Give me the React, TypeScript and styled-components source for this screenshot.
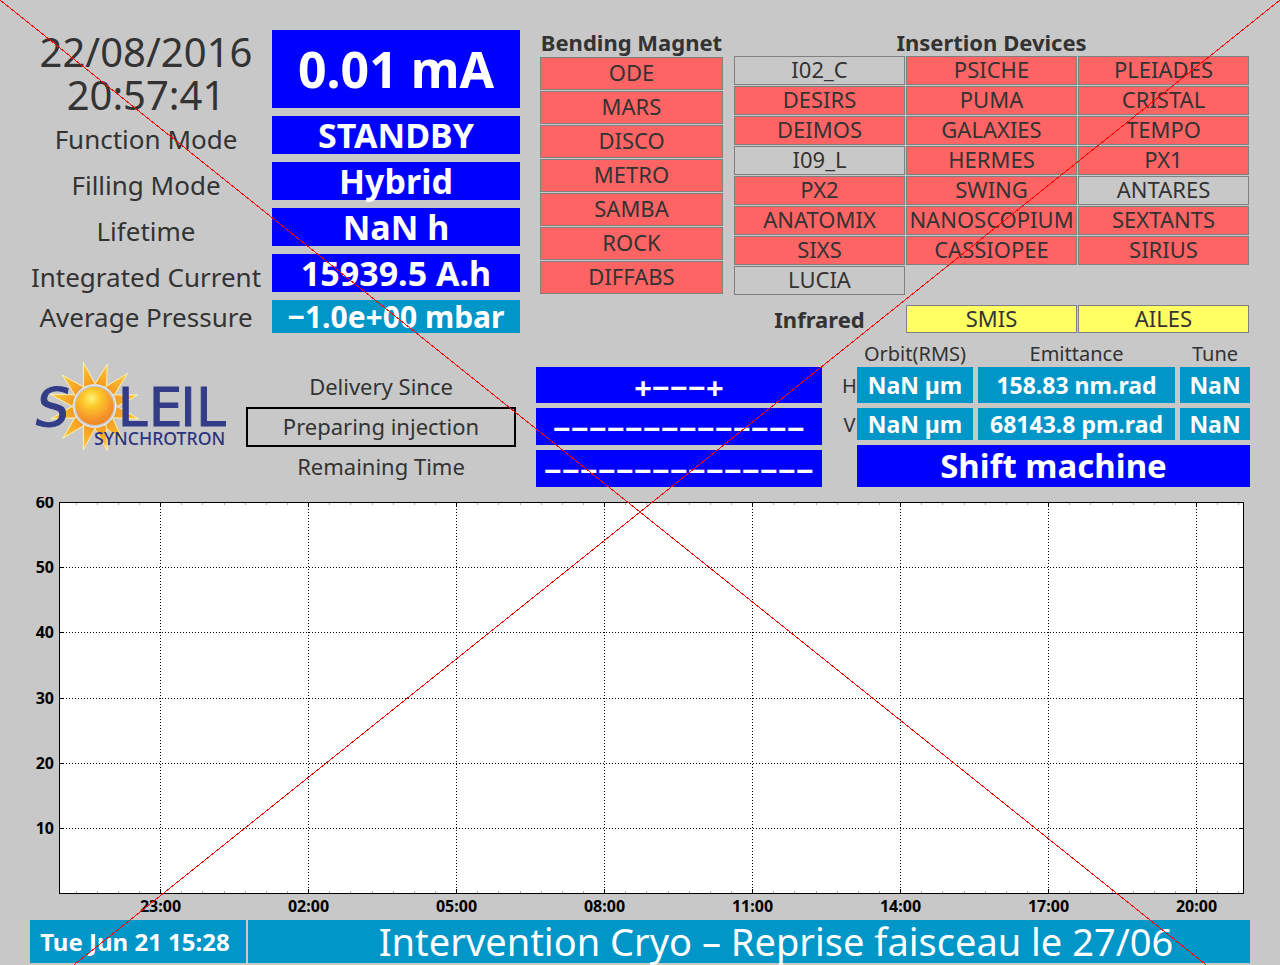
import React from "react";
import styled, { createGlobalStyle } from "styled-components";

const color = {
  page: "#c8c8c8",
  text: "#333333",
  blue: "#0000ff",
  cyan: "#0096c8",
  closed: "#ff6464",
  open: "#ffff64",
  line: "#808080",
};

const GlobalStyle = createGlobalStyle`
  *, *::before, *::after { box-sizing: border-box; }
  body {
    margin: 0;
    background: ${color.page};
    color: ${color.text};
    font-family: "Noto Sans", "Open Sans", sans-serif;
  }
`;

const Page = styled.main`
  position: relative;
  overflow: hidden;
  padding: 30px 30px 2px;
`;

const TopSection = styled.section`
  display: grid;
  grid-template-columns: 499fr 183fr 515fr;
  column-gap: 11px;
  padding-right: 1px;
`;

/* Machine status */

const Status = styled.dl`
  display: grid;
  grid-template-columns: 232fr 248fr;
  grid-template-rows: 78px repeat(4, 38px) 33px;
  gap: 8px 10px;
  margin: 0 9px 0 0;
`;

const Clock = styled.dt`
  font-size: 40px;
  line-height: 43px;
  text-align: center;
`;

const StatusLabel = styled.dt<{ $lowered?: boolean }>`
  display: flex;
  align-items: center;
  justify-content: center;
  padding-top: ${(p) => (p.$lowered ? 8 : 0)}px;
  font-size: 26px;
  line-height: 30px;
  white-space: nowrap;
`;

const Value = styled.dd<{ $size: number; $tone?: "blue" | "cyan" }>`
  display: flex;
  align-items: center;
  justify-content: center;
  margin: 0;
  background: ${(p) => color[p.$tone ?? "blue"]};
  color: #fff;
  font-size: ${(p) => p.$size}px;
  font-weight: 700;
  line-height: 1;
  white-space: nowrap;
`;

/* Beamlines */

const Heading = styled.h2<{ $gap: number }>`
  margin: 0 0 ${(p) => p.$gap}px;
  font-size: 22px;
  font-weight: 700;
  line-height: 24px;
  text-align: center;
  white-space: nowrap;
`;

const BeamlineGrid = styled.ul<{ $columns: number; $row: number }>`
  display: grid;
  grid-template-columns: repeat(${(p) => p.$columns}, 1fr);
  grid-auto-rows: ${(p) => p.$row}px;
  gap: 1px;
  margin: 0;
  padding: 0;
  list-style: none;
`;

const Beamline = styled.li<{ $state: "closed" | "open" | "off" }>`
  display: flex;
  align-items: center;
  justify-content: center;
  padding-bottom: 3px;
  border: 1px solid ${color.line};
  background: ${(p) => (p.$state === "off" ? "transparent" : color[p.$state])};
  font-size: 22px;
  line-height: 22px;
  white-space: nowrap;
`;

const InfraredRow = styled.div`
  display: grid;
  grid-template-columns: 171fr 343fr;
  column-gap: 1px;
  align-items: center;
  margin-top: 10px;
`;

/* Delivery, beam parameters */

const MiddleSection = styled.section`
  display: grid;
  grid-template-columns: 216fr 270fr 326fr 408fr;
  margin-top: 12px;
`;

const Logo = styled.svg`
  display: block;
  width: 100%;
  max-width: 216px;
  margin-top: 15px;
`;

const DeliveryLabels = styled.div`
  display: grid;
  grid-template-rows: repeat(3, 40px);
  padding-top: 22px;
`;

const DeliveryLabel = styled.div<{ $framed?: boolean }>`
  display: flex;
  align-items: center;
  justify-content: center;
  padding-bottom: 2px;
  border: 2px solid ${(p) => (p.$framed ? "#000" : "transparent")};
  font-size: 22px;
  line-height: 24px;
  white-space: nowrap;
`;

const DeliveryValues = styled.div`
  display: grid;
  grid-template-rows: 36px 37px 37px;
  row-gap: 5px;
  margin: 0 20px;
  padding-top: 22px;
`;

const DeliveryValue = styled.div`
  display: flex;
  align-items: center;
  justify-content: center;
  padding-top: 4px;
  background: ${color.blue};
  color: #fff;
  font-size: 31px;
  font-weight: 700;
  line-height: 1;
  white-space: nowrap;
`;

const Parameters = styled.div``;

const ParameterTable = styled.table`
  display: grid;
  grid-template-columns: 10px 116fr 197fr 70fr;
  grid-template-rows: 17px 36px 32px;
  gap: 5px;

  thead, tbody, tr { display: contents; }
`;

const ColumnHead = styled.th`
  padding: 0;
  font-size: 20px;
  font-weight: 400;
  line-height: 17px;
  white-space: nowrap;
`;

const RowHead = styled.th`
  display: flex;
  align-items: center;
  justify-content: center;
  margin-right: -5px;
  padding: 0;
  font-size: 20px;
  font-weight: 400;
`;

const ParameterValue = styled.td`
  display: flex;
  align-items: center;
  justify-content: center;
  padding: 0;
  background: ${color.cyan};
  color: #fff;
  font-size: 23px;
  font-weight: 700;
  line-height: 1;
  white-space: nowrap;
`;

const Shift = styled.div`
  margin: 5px 0 0 15px;
  background: ${color.blue};
  color: #fff;
  font-size: 33px;
  font-weight: 700;
  line-height: 42px;
  text-align: center;
`;

/* Chart and message */

const Chart = styled.svg`
  display: block;
  width: 100%;
  margin-top: 10px;
  font-size: 16px;
  font-weight: 700;
`;

const Footer = styled.footer`
  display: grid;
  grid-template-columns: 216fr 1002fr;
  column-gap: 2px;
  margin-top: 3px;
  color: #fff;
  line-height: 43px;
  text-align: center;
  white-space: nowrap;
`;

const MessageDate = styled.div`
  padding-right: 6px;
  background: ${color.cyan};
  font-size: 24px;
  font-weight: 700;
`;

const Message = styled.div`
  padding-left: 54px;
  background: ${color.cyan};
  font-size: 38px;
`;

const Cross = styled.svg`
  position: absolute;
  top: 0;
  left: 0;
  width: 100%;
  pointer-events: none;
`;

const statusRows = [
  { label: "Function Mode", value: "STANDBY" },
  { label: "Filling Mode", value: "Hybrid" },
  { label: "Lifetime", value: "NaN h" },
  { label: "Integrated Current", value: "15939.5 A.h" },
];

const bending = ["ODE", "MARS", "DISCO", "METRO", "SAMBA", "ROCK", "DIFFABS"];

const insertion = [
  "I02_C", "PSICHE", "PLEIADES",
  "DESIRS", "PUMA", "CRISTAL",
  "DEIMOS", "GALAXIES", "TEMPO",
  "I09_L", "HERMES", "PX1",
  "PX2", "SWING", "ANTARES",
  "ANATOMIX", "NANOSCOPIUM", "SEXTANTS",
  "SIXS", "CASSIOPEE", "SIRIUS",
  "LUCIA",
];
const offline = new Set(["I02_C", "I09_L", "ANTARES", "LUCIA"]);

const parameters = [
  { axis: "H", values: ["NaN µm", "158.83 nm.rad", "NaN"] },
  { axis: "V", values: ["NaN µm", "68143.8 pm.rad", "NaN"] },
];

const rayTips: [number, number][] = [
  [190, 37], [262, 42], [323, 70], [353, 135], [357, 207], [312, 276],
  [262, 302], [190, 300], [128, 265], [92, 207], [90, 133], [127, 75],
];

function rayPoints([x, y]: [number, number]) {
  const angle = Math.atan2(y - 168, x - 224);
  const base = [-0.28, 0.28].map(
    (d) => `${224 + 66 * Math.cos(angle + d)},${168 + 66 * Math.sin(angle + d)}`
  );
  return `${base[0]} ${x},${y} ${base[1]}`;
}

function SoleilLogo() {
  return (
    <Logo viewBox="30 30 648 280" role="img" aria-label="Soleil Synchrotron">
      <defs>
        <radialGradient id="disc" cx="0.42" cy="0.3" r="0.72">
          <stop offset="0" stopColor="#fff27a" />
          <stop offset="0.3" stopColor="#fdcb2c" />
          <stop offset="0.75" stopColor="#f6962a" />
          <stop offset="1" stopColor="#ee8424" />
        </radialGradient>
        <radialGradient id="rays" gradientUnits="userSpaceOnUse" cx="224" cy="168" r="140">
          <stop offset="0.45" stopColor="#f59a22" />
          <stop offset="1" stopColor="#fdcf3a" />
        </radialGradient>
      </defs>
      {rayTips.map((tip) => (
        <polygon key={tip.join()} points={rayPoints(tip)} fill="url(#rays)" stroke="#fdf3b4" strokeWidth="3" />
      ))}
      <circle cx="224" cy="168" r="66" fill="#c8c8c8" />
      <circle cx="224" cy="168" r="63" fill="none" stroke="#efefef" strokeWidth="3" />
      <circle cx="224" cy="168" r="57" fill="url(#disc)" />
      <g fill="#333c86" stroke="#333c86" strokeWidth="3" fontSize="160" fontFamily="DejaVu Sans, sans-serif">
        <text x="48" y="227" fontStyle="italic">S</text>
        <text x="293" y="227">L</text>
        <text x="386" y="227">E</text>
        <text x="481" y="227">I</text>
        <text x="528" y="227">L</text>
      </g>
      <text x="222" y="285" fill="#2c3580" fontSize="53" fontWeight="500" fontFamily="Noto Sans, sans-serif">
        SYNCHROTRON
      </text>
    </Logo>
  );
}

const plot = { left: 59.5, right: 1243.5, top: 502.5, bottom: 893.5 };
const times = ["23:00", "02:00", "05:00", "08:00", "11:00", "14:00", "17:00", "20:00"];
const timeX = (i: number) => 160.5 + 148 * i;
const levels = [60, 50, 40, 30, 20, 10];
const levelY = (v: number) => Math.round(893 - (v * 391) / 60) + 0.5;
const minorTicks = Array.from({ length: 56 }, (_, k) => Math.round(75.5 + (148 / 7) * k) + 0.5).filter(
  (x) => x < plot.right
);

function CurrentChart() {
  return (
    <Chart viewBox="30 497 1220 420" role="img" aria-label="Beam current history">
      <g shapeRendering="crispEdges" stroke="#000">
        <rect x={plot.left} y={plot.top} width={plot.right - plot.left} height={plot.bottom - plot.top} fill="#fff" />
        {minorTicks.map((x) => (
          <path key={x} d={`M${x} 503v2M${x} 891v2`} stroke="#b0b0b0" />
        ))}
        {times.map((t, i) => (
          <g key={t}>
            <path d={`M${timeX(i)} 503V893`} strokeDasharray="1 2" />
            <path d={`M${timeX(i)} 503v4M${timeX(i)} 889v4`} />
          </g>
        ))}
        {levels.slice(1).map((v) => (
          <g key={v}>
            <path d={`M60 ${levelY(v)}H1243`} strokeDasharray="1 2" />
            <path d={`M60 ${levelY(v)}h4M1239 ${levelY(v)}h4`} />
          </g>
        ))}
      </g>
      {levels.map((v) => (
        <text key={v} x="54" y={levelY(v) + 5} textAnchor="end">
          {v}
        </text>
      ))}
      {times.map((t, i) => (
        <text key={t} x={timeX(i)} y="912" textAnchor="middle">
          {t}
        </text>
      ))}
    </Chart>
  );
}

export default function App() {
  return (
    <>
      <GlobalStyle />
      <Page>
        <TopSection>
          <Status>
            <Clock>
              22/08/2016
              <br />
              20:57:41
            </Clock>
            <Value $size={50}>0.01 mA</Value>
            {statusRows.map((row) => (
              <React.Fragment key={row.label}>
                <StatusLabel $lowered>{row.label}</StatusLabel>
                <Value $size={34}>{row.value}</Value>
              </React.Fragment>
            ))}
            <StatusLabel>Average Pressure</StatusLabel>
            <Value $size={30} $tone="cyan">
              −1.0e+00 mbar
            </Value>
          </Status>

          <div>
            <Heading $gap={3}>Bending Magnet</Heading>
            <BeamlineGrid $columns={1} $row={33}>
              {bending.map((name) => (
                <Beamline key={name} $state="closed">
                  {name}
                </Beamline>
              ))}
            </BeamlineGrid>
          </div>

          <div>
            <Heading $gap={2}>Insertion Devices</Heading>
            <BeamlineGrid $columns={3} $row={29}>
              {insertion.map((name) => (
                <Beamline key={name} $state={offline.has(name) ? "off" : "closed"}>
                  {name}
                </Beamline>
              ))}
            </BeamlineGrid>
            <InfraredRow>
              <Heading $gap={0}>Infrared</Heading>
              <BeamlineGrid $columns={2} $row={28}>
                <Beamline $state="open">SMIS</Beamline>
                <Beamline $state="open">AILES</Beamline>
              </BeamlineGrid>
            </InfraredRow>
          </div>
        </TopSection>

        <MiddleSection>
          <SoleilLogo />
          <DeliveryLabels>
            <DeliveryLabel>Delivery Since</DeliveryLabel>
            <DeliveryLabel $framed>Preparing injection</DeliveryLabel>
            <DeliveryLabel>Remaining Time</DeliveryLabel>
          </DeliveryLabels>
          <DeliveryValues>
            <DeliveryValue>+−−−+</DeliveryValue>
            <DeliveryValue>−−−−−−−−−−−−−−</DeliveryValue>
            <DeliveryValue>−−−−−−−−−−−−−−−</DeliveryValue>
          </DeliveryValues>
          <Parameters>
            <ParameterTable>
              <thead>
                <tr>
                  <td />
                  <ColumnHead scope="col">Orbit(RMS)</ColumnHead>
                  <ColumnHead scope="col">Emittance</ColumnHead>
                  <ColumnHead scope="col">Tune</ColumnHead>
                </tr>
              </thead>
              <tbody>
                {parameters.map((row) => (
                  <tr key={row.axis}>
                    <RowHead scope="row">{row.axis}</RowHead>
                    {row.values.map((value, i) => (
                      <ParameterValue key={i}>{value}</ParameterValue>
                    ))}
                  </tr>
                ))}
              </tbody>
            </ParameterTable>
            <Shift>Shift machine</Shift>
          </Parameters>
        </MiddleSection>

        <CurrentChart />

        <Footer>
          <MessageDate>Tue Jun 21 15:28</MessageDate>
          <Message>Intervention Cryo – Reprise faisceau le 27/06</Message>
        </Footer>

        <Cross viewBox="0 0 1280 1024" aria-hidden="true">
          <path d="M0 0L1280 1024M1280 0L0 1024" stroke="#ff0000" shapeRendering="crispEdges" />
        </Cross>
      </Page>
    </>
  );
}
